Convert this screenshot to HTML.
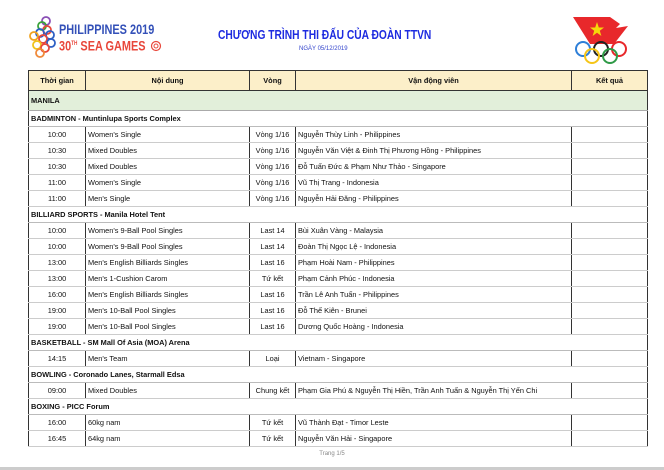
<!DOCTYPE html>
<html><head><meta charset="utf-8">
<style>
*{margin:0;padding:0;box-sizing:border-box}
body{width:664px;height:470px;background:#fff;position:relative;overflow:hidden;font-family:"Liberation Sans",sans-serif;color:#111}
.abs{position:absolute}
table{position:absolute;left:28px;top:70px;width:619px;border-collapse:collapse;table-layout:fixed;font-size:7.4px}
td{height:16px;border-left:1px solid #333;border-right:1px solid #333;border-bottom:1px solid #ccc;padding:0 2px;white-space:nowrap;overflow:hidden}
td.c{text-align:center}
tr.h td{height:20px;background:#fcefc9;text-align:center;border-top:1px solid #333;border-bottom:1px solid #333;font-weight:bold}
tr.m td{height:20px;background:#e2efda;font-weight:bold;border-bottom:1px solid #aaa}
tr.s td{height:16px;font-weight:bold;border-top:1px solid #333;border-bottom:1px solid #bbb}
</style></head><body>
<svg class="abs" style="left:27px;top:16px" width="32" height="42" viewBox="0 0 30 42" fill="none" stroke-width="1.8">
<circle cx="18" cy="5" r="4" stroke="#8a4fb5"/>
<circle cx="14" cy="10" r="4" stroke="#3aa33a"/>
<circle cx="19" cy="14" r="4" stroke="#e8473b"/>
<circle cx="12" cy="17" r="4" stroke="#2d5fc4"/>
<circle cx="22" cy="19" r="4" stroke="#2d5fc4"/>
<circle cx="6" cy="20" r="4" stroke="#f0a21f"/>
<circle cx="15" cy="23" r="4" stroke="#e8473b"/>
<circle cx="23" cy="27" r="4" stroke="#2d5fc4"/>
<circle cx="9" cy="29" r="4" stroke="#f0c419"/>
<circle cx="17" cy="32" r="4" stroke="#e8473b"/>
<circle cx="12" cy="37" r="4" stroke="#f08a3a"/>
</svg>
<div class="abs" style="left:59px;top:22px;font-size:14px;font-weight:bold;color:#3350b8;transform:scaleX(0.78);transform-origin:left;white-space:nowrap;line-height:14px">PHILIPPINES 2019</div>
<div class="abs" style="left:59px;top:37px;font-size:14px;font-weight:bold;color:#e8473b;transform:scaleX(0.78);transform-origin:left;white-space:nowrap;line-height:14px">30<sup style="font-size:6px">TH</sup> SEA GAMES</div>
<svg class="abs" style="left:150px;top:40px" width="12" height="12"><circle cx="6" cy="6" r="4.5" fill="none" stroke="#e8473b" stroke-width="1.2"/><circle cx="6" cy="6" r="2" fill="none" stroke="#e8473b"/></svg>
<div class="abs" style="left:218px;top:28px;width:210px;font-size:12.5px;font-weight:bold;color:#1d2be0;white-space:nowrap;transform:scaleX(0.82);transform-origin:left;line-height:14px">CHƯƠNG TRÌNH THI ĐẤU CỦA ĐOÀN TTVN</div>
<div class="abs" style="left:299px;top:45px;font-size:6px;color:#3344cc;line-height:8px">NGÀY 05/12/2019</div>
<svg class="abs" style="left:570px;top:14px" width="66" height="50" viewBox="0 0 66 50">
<path d="M3 3 L40 3 L50 10 L46 14 L58 12 L44 30 L20 30 Z" fill="#e8282b"/>
<polygon points="27,8 28.8,13.5 34,13.5 29.8,16.7 31.4,22 27,18.8 22.6,22 24.2,16.7 20,13.5 25.2,13.5" fill="#f5d90a"/>
<g fill="none" stroke-width="2">
<circle cx="13" cy="35" r="7" stroke="#2e7fd8"/>
<circle cx="31" cy="35" r="7" stroke="#222"/>
<circle cx="49" cy="35" r="7" stroke="#e8282b"/>
<circle cx="22" cy="42" r="7" stroke="#f5c518"/>
<circle cx="40" cy="42" r="7" stroke="#2f9a47"/>
</g></svg>
<table>
<colgroup><col style="width:57px"><col style="width:164px"><col style="width:46px"><col style="width:276px"><col style="width:76px"></colgroup>
<tr class="h"><td>Thời gian</td><td>Nội dung</td><td>Vòng</td><td>Vận động viên</td><td>Kết quả</td></tr>
<tr class="m"><td colspan="5">MANILA</td></tr>
<tr class="s"><td colspan="5">BADMINTON - Muntinlupa Sports Complex</td></tr>
<tr><td class="c">10:00</td><td>Women's Single</td><td class="c">Vòng 1/16</td><td>Nguyễn Thùy Linh - Philippines</td><td></td></tr>
<tr><td class="c">10:30</td><td>Mixed Doubles</td><td class="c">Vòng 1/16</td><td>Nguyễn Văn Việt &amp; Đinh Thị Phương Hồng - Philippines</td><td></td></tr>
<tr><td class="c">10:30</td><td>Mixed Doubles</td><td class="c">Vòng 1/16</td><td>Đỗ Tuấn Đức &amp; Phạm Như Thảo - Singapore</td><td></td></tr>
<tr><td class="c">11:00</td><td>Women's Single</td><td class="c">Vòng 1/16</td><td>Vũ Thị Trang - Indonesia</td><td></td></tr>
<tr><td class="c">11:00</td><td>Men's Single</td><td class="c">Vòng 1/16</td><td>Nguyễn Hải Đăng - Philippines</td><td></td></tr>
<tr class="s"><td colspan="5">BILLIARD SPORTS - Manila Hotel Tent</td></tr>
<tr><td class="c">10:00</td><td>Women's 9-Ball Pool Singles</td><td class="c">Last 14</td><td>Bùi Xuân Vàng - Malaysia</td><td></td></tr>
<tr><td class="c">10:00</td><td>Women's 9-Ball Pool Singles</td><td class="c">Last 14</td><td>Đoàn Thị Ngọc Lệ - Indonesia</td><td></td></tr>
<tr><td class="c">13:00</td><td>Men's English Billiards Singles</td><td class="c">Last 16</td><td>Phạm Hoài Nam - Philippines</td><td></td></tr>
<tr><td class="c">13:00</td><td>Men's 1-Cushion Carom</td><td class="c">Tứ kết</td><td>Phạm Cảnh Phúc - Indonesia</td><td></td></tr>
<tr><td class="c">16:00</td><td>Men's English Billiards Singles</td><td class="c">Last 16</td><td>Trần Lê Anh Tuấn - Philippines</td><td></td></tr>
<tr><td class="c">19:00</td><td>Men's 10-Ball Pool Singles</td><td class="c">Last 16</td><td>Đỗ Thế Kiên - Brunei</td><td></td></tr>
<tr><td class="c">19:00</td><td>Men's 10-Ball Pool Singles</td><td class="c">Last 16</td><td>Dương Quốc Hoàng - Indonesia</td><td></td></tr>
<tr class="s"><td colspan="5">BASKETBALL - SM Mall Of Asia (MOA) Arena</td></tr>
<tr><td class="c">14:15</td><td>Men's Team</td><td class="c">Loại</td><td>Vietnam - Singapore</td><td></td></tr>
<tr class="s"><td colspan="5">BOWLING - Coronado Lanes, Starmall Edsa</td></tr>
<tr><td class="c">09:00</td><td>Mixed Doubles</td><td class="c">Chung kết</td><td>Phạm Gia Phú &amp; Nguyễn Thị Hiền, Trần Anh Tuấn &amp; Nguyễn Thị Yến Chi</td><td></td></tr>
<tr class="s"><td colspan="5">BOXING - PICC Forum</td></tr>
<tr><td class="c">16:00</td><td>60kg nam</td><td class="c">Tứ kết</td><td>Vũ Thành Đạt - Timor Leste</td><td></td></tr>
<tr><td class="c">16:45</td><td>64kg nam</td><td class="c">Tứ kết</td><td>Nguyễn Văn Hải - Singapore</td><td></td></tr>
</table>
<div class="abs" style="left:0;width:664px;top:451px;text-align:center;font-size:6px;color:#888">Trang 1/5</div>
<div class="abs" style="left:0;width:664px;top:467px;height:3px;background:#ccc"></div>
</body></html>
